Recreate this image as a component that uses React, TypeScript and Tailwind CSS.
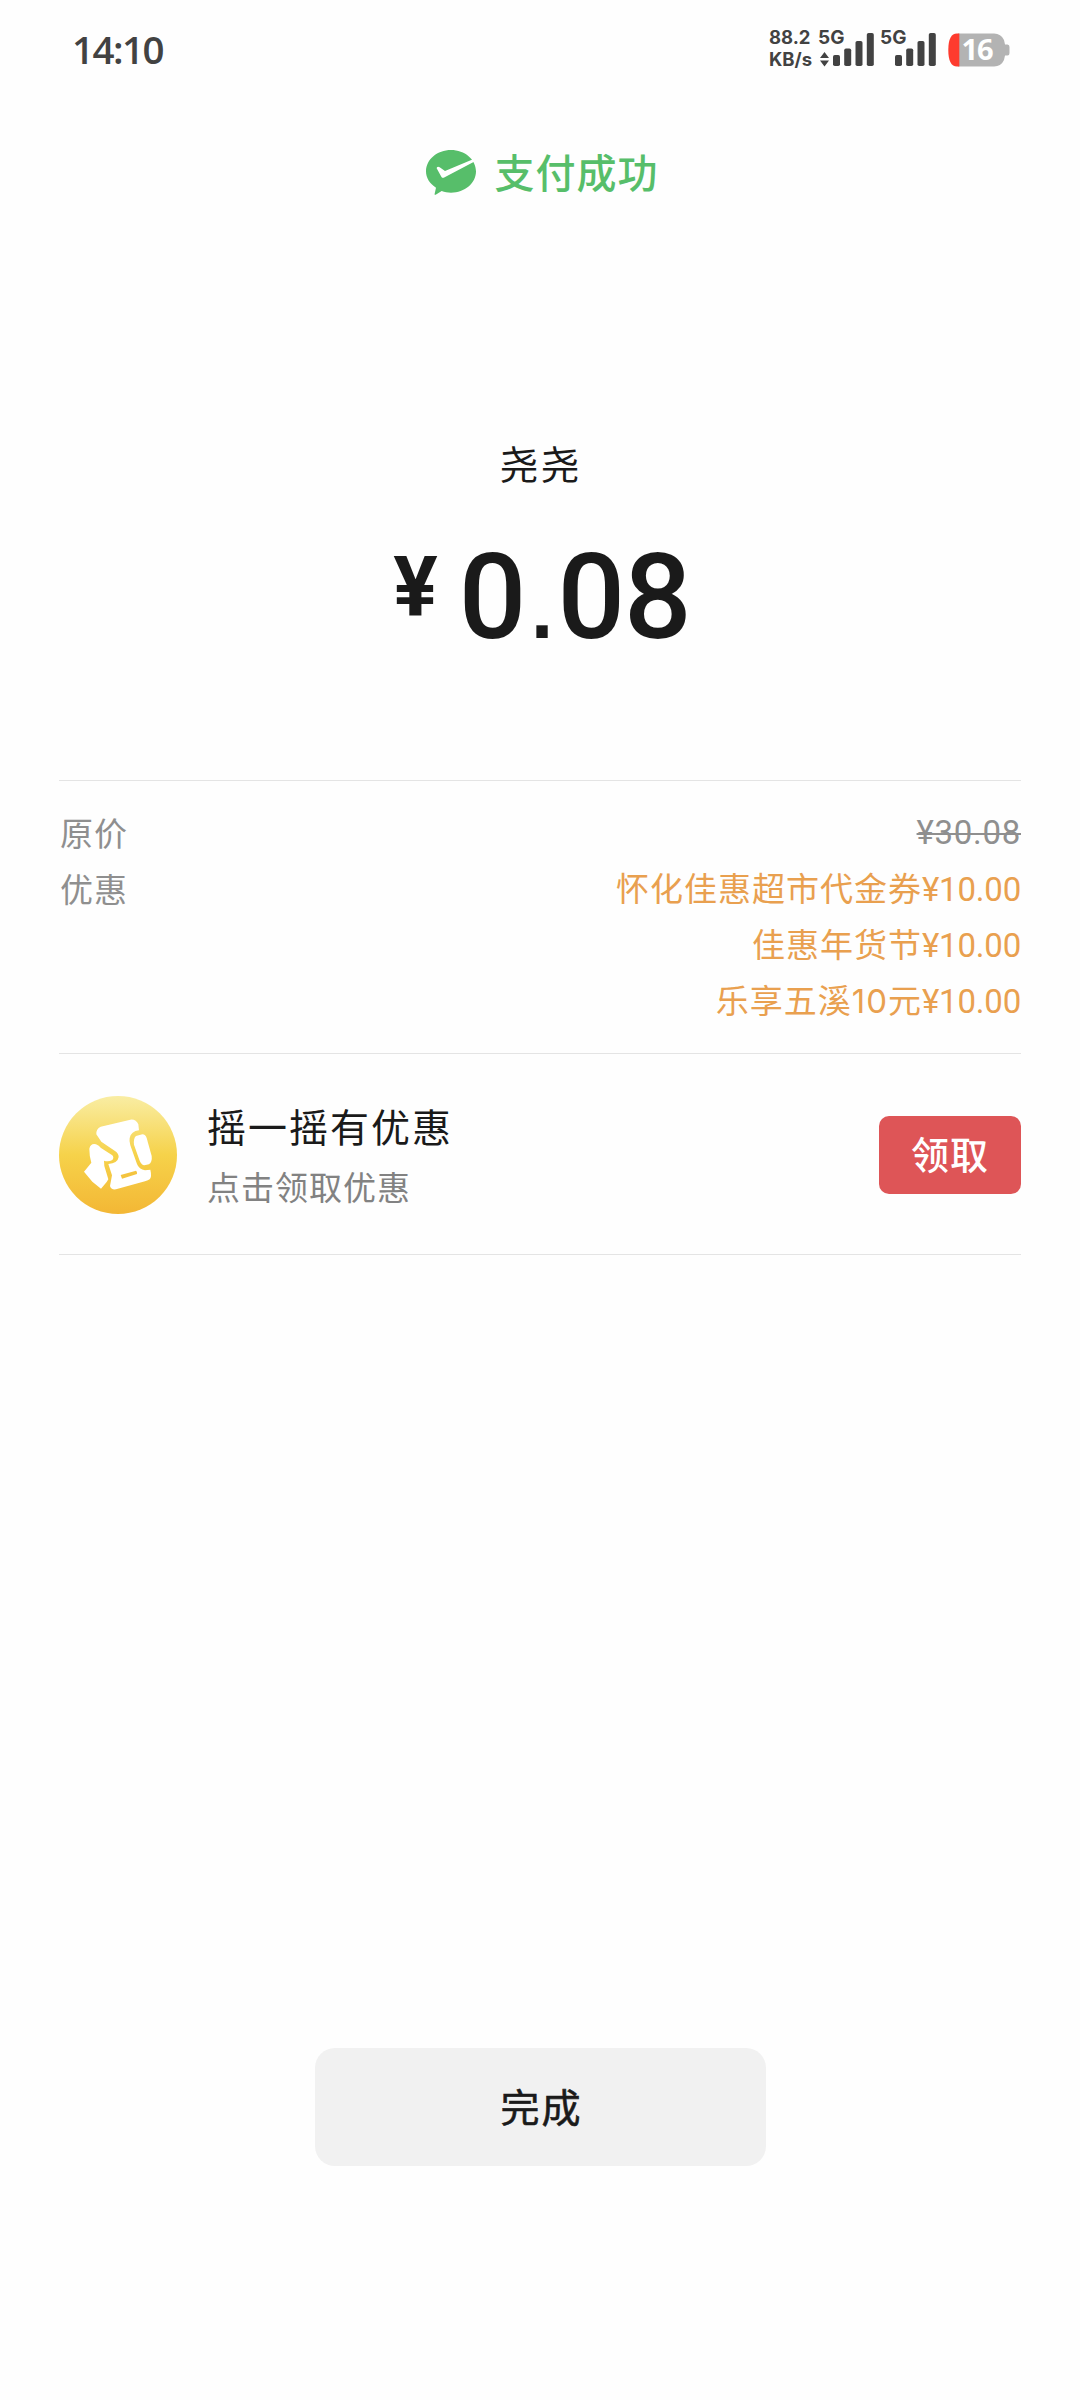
import type { ReactNode } from 'react'

type Discount = {
  name: string
  amount: string
}

const discounts: Discount[] = [
  { name: '怀化佳惠超市代金券', amount: '¥10.00' },
  { name: '佳惠年货节', amount: '¥10.00' },
  { name: '乐享五溪10元', amount: '¥10.00' },
]

const SignalBars = () => (
  <svg width="41" height="33" viewBox="0 0 41 33" fill="#424242">
    <rect x="0" y="22" width="7" height="11" rx="1.8" />
    <rect x="11.2" y="15.500" width="7" height="17.500" rx="1.8" />
    <rect x="22.500" y="8" width="7" height="25" rx="1.8" />
    <rect x="33.800" y="0" width="7" height="33" rx="1.8" />
  </svg>
)

const Battery = () => (
  <div className="relative">
    <svg width="62" height="34" viewBox="0 0 62 34">
      <path d="M10 0.500H46Q53 0.500 56 7L57 11.500H59.500Q61.500 11.500 61.500 14V20Q61.500 22.500 59.500 22.500H57L56 27Q53 33.500 46 33.500H10Z" fill="#b3b3b3" />
      <path d="M11.300 0.500H9Q0.300 0.500 0.300 17T9 33.500H11.300Z" fill="#fe3b2e" />
    </svg>
    <span className="absolute -top-[4px] left-[13px] w-[32px] text-center font-['Open_Sans',sans-serif] text-[29px] leading-[40px] font-bold tracking-[-1px] text-white">16</span>
  </div>
)

const StatusBar = () => (
  <div className="flex h-[100px] justify-between pl-[72px] pr-[70px] text-[#424242]">
    <div className="pt-[29px] font-['Open_Sans',sans-serif] text-[38.500px] leading-[40px] font-semibold tracking-[-1.500px]">14:10</div>
    <div className="flex font-['Inter',sans-serif] font-bold">
      <div className="mr-[7px] w-[43px] pt-[26px] text-[18.500px] leading-[22px] whitespace-nowrap">
        <div>88.2</div>
        <div>KB/s</div>
      </div>
      {/* first sim, with the traffic arrows below the label */}
      <div className="relative mr-[7px] w-[55px] pt-[33px] pl-[13.500px]">
        <span className="absolute top-[27px] -left-px text-[19px] leading-[22px]">5G</span>
        <svg className="absolute top-[52px] left-px" width="9" height="15" viewBox="0 0 9 15" fill="#424242">
          <path d="M4.500 0L9 6H0ZM4.500 14.500L9 8.500H0Z" />
        </svg>
        <SignalBars />
      </div>
      <div className="relative mr-[12px] w-[55px] pt-[33px] pl-[13.500px]">
        <span className="absolute top-[27px] -left-px text-[19px] leading-[22px]">5G</span>
        <SignalBars />
      </div>
      <div className="pt-[33px]">
        <Battery />
      </div>
    </div>
  </div>
)

const PaySuccessIcon = () => (
  <svg width="50" height="45" viewBox="0 0 150 135">
    <path d="M75 0C116 0 150 28 150 64S116 128 75 128C65 128 56 126 47 123L29 134Q25 136 26 131L30 113C11 101 0 84 0 64C0 28 34 0 75 0Z" fill="#57be6a" />
    <path d="M33 52Q36 49 41 52L57 63L143 27L147 34L56 82Q49 86 46 80L32 55Z" fill="#fff" />
  </svg>
)

const ShakeIcon = () => (
  <svg width="118" height="118" viewBox="12 12 354 354">
    <defs>
      <linearGradient id="gold" x1="0" y1="0" x2="0" y2="1">
        <stop offset="0" stopColor="#f9eda3" />
        <stop offset="0.500" stopColor="#f6d24a" />
        <stop offset="1" stopColor="#f3b735" />
      </linearGradient>
    </defs>
    <circle cx="189" cy="189" r="177" fill="url(#gold)" />
    <g fill="#fff">
      <path d="M137 104L226 83Q243 81 250 97L252 115Q228 118 224 138Q222 148 226 160L246 216Q252 232 270 235L286 233Q291 254 284 262Q280 265 270 268L183 292Q168 294 165 282L171 250L160 216Q188 214 191 195Q191 185 180 177L139 149L124 127Q123 110 137 104Z" />
      <path d="M103 170Q107 153 123 157Q132 160 138 168L172 190Q178 197 172 204Q160 210 147 206L148 222L160 262L155 270L138 290L112 269L87 239L109 212Q103 195 103 170Z" />
      <path d="M243 132L262 127Q272 128 275 138L290 192Q292 210 282 217L268 220Q259 218 254 206L237 158Q235 138 243 132Z" />
    </g>
    <path d="M197 249L243 236Q247 239 246 246L201 260Z" fill="#f4c43f" />
  </svg>
)

const Section = ({ className, children }: { className: string; children: ReactNode }) => (
  <section className={`border-t border-[#e4e4e4] ${className}`}>{children}</section>
)

export default function App() {
  return (
    <div className="flex h-[2400px] w-[1080px] flex-col bg-[#fefefe] font-['Noto_Sans_CJK_SC',sans-serif] text-[#1a1a1a]">
      <StatusBar />

      <header className="flex h-[146px] items-start justify-center pt-[50px] pl-[4px]">
        <PaySuccessIcon />
        <h1 className="-mt-[2px] ml-[19px] text-[40px] leading-[46px] font-medium tracking-[1px] text-[#57be6a]">支付成功</h1>
      </header>

      <div className="flex h-[534px] flex-col items-center pt-[191px]">
        <div className="pl-px text-[39px] leading-[50px] tracking-[2px]">尧尧</div>
        <div className="mt-[40px] flex items-start pl-[4px] font-['Roboto',sans-serif] font-medium">
          <span className="mt-[19px] mr-[21px] text-[83px] leading-[83px] font-bold">¥</span>
          <span className="text-[119px] leading-[140px] tracking-[-1px]">
            0<span className="font-['Liberation_Sans',sans-serif] font-normal">.</span>08
          </span>
        </div>
      </div>

      <main className="px-[59px]">
        <Section className="flex h-[273px] justify-between pt-[23px] text-[33px] leading-[56px] tracking-[1px]">
          <div className="pl-px text-[#8f8f8f]">
            <div>原价</div>
            <div>优惠</div>
          </div>
          <div className="text-right text-[#e9a04f]">
            <div className="h-[56px] pt-px font-['Roboto',sans-serif] tracking-[0.7px] text-[#8f8f8f] line-through decoration-2">¥30.08</div>
            {discounts.map((item) => (
              <div key={item.name} className="flex h-[56px] justify-end pt-px">
                <span className="font-['Inter','Noto_Sans_CJK_SC',sans-serif]">{item.name}</span>
                <span className="pt-px font-['Roboto',sans-serif] tracking-[-0.2px]">{item.amount}</span>
              </div>
            ))}
          </div>
        </Section>

        <Section className="flex h-[202px] items-start border-b pt-[42px]">
          <ShakeIcon />
          <div className="ml-[30px] flex-1">
            <div className="pt-[4px] text-[39px] leading-[50px] tracking-[2px]">摇一摇有优惠</div>
            <div className="mt-[16px] text-[33px] leading-[40px] tracking-[1px] text-[#828282]">点击领取优惠</div>
          </div>
          <button className="mt-5 h-[78px] w-[142px] rounded-[10px] bg-[#de5557] pb-[5px] text-[38px] font-medium tracking-[1px] text-white">领取</button>
        </Section>
      </main>

      <div className="mt-[793px] flex justify-center pl-px">
        <button className="h-[118px] w-[451px] rounded-[20px] bg-[#f1f1f1] pb-[3px] pl-[2px] text-[39px] tracking-[2px] [-webkit-text-stroke:0.6px]">完成</button>
      </div>
    </div>
  )
}
